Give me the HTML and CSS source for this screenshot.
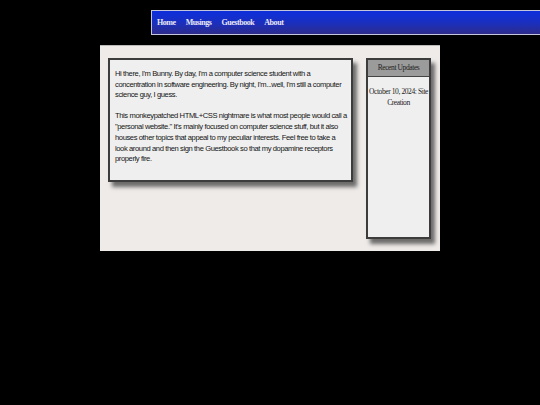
FILE: index.html
```html
<!DOCTYPE html>
<html>
<head>
<meta charset="utf-8">
<link rel="stylesheet" href="styles.css">
</head>
<body>
<nav class="topnav">
  <a href="#">Home</a>
  <a href="#">Musings</a>
  <a href="#">Guestbook</a>
  <a href="#">About</a>
</nav>
<main class="page">
  <section class="intro">
    <p>Hi there, I'm Bunny. By day, I'm a computer science student with a concentration in software engineering. By night, I'm...well, I'm still a computer science guy, I guess.</p>
    <p>This monkeypatched HTML+CSS nightmare is what most people would call a "personal website." It's mainly focused on computer science stuff, but it also houses other topics that appeal to my peculiar interests. Feel free to take a look around and then sign the Guestbook so that my dopamine receptors properly fire.</p>
  </section>
  <aside class="updates">
    <div class="updates-head">Recent Updates</div>
    <div class="updates-body">October 10, 2024: Site Creation</div>
  </aside>
</main>
</body>
</html>
```

FILE: styles.css
```css
html, body {
  margin: 0;
  padding: 0;
  background: #000;
}
body {
  padding-top: 10px;
}
.topnav {
  margin-left: 151px;
  height: 23px;
  border: 1px solid #c4c4dc;
  border-right: none;
  background: linear-gradient(to bottom, #0d2fdc 0%, #1a2fc0 50%, #2d2b8a 100%);
  display: flex;
  align-items: center;
  gap: 10px;
  padding-left: 5px;
}
.topnav a {
  font-family: "Liberation Serif", "Times New Roman", serif;
  font-weight: bold;
  font-size: 8px;
  letter-spacing: -0.45px;
  color: #e8e8f4;
  text-decoration: none;
}
.page {
  margin: 10px 0 0 100px;
  width: 340px;
  height: 206px;
  box-sizing: border-box;
  background: #eeebe9;
  border-top: 1px solid #bbb;
  padding: 12px 9px 0 8px;
  display: flex;
  align-items: flex-start;
  gap: 13px;
}
.intro {
  width: 245px;
  box-sizing: border-box;
  background: #efefef;
  border: 2px solid #3c3c3c;
  box-shadow: 4px 5px 4px rgba(0, 0, 0, 0.55);
  padding: 9px 3px 5px 5px;
  font-family: "Liberation Sans", Arial, sans-serif;
  font-size: 7.6px;
  letter-spacing: -0.4px;
  line-height: 10.7px;
  color: #151515;
}
.intro p {
  margin: 0 0 10.3px;
}
.updates {
  width: 65px;
  height: 181px;
  box-sizing: border-box;
  background: #efefef;
  border: 2px solid #3c3c3c;
  box-shadow: 4px 5px 4px rgba(0, 0, 0, 0.55);
  font-family: "Liberation Serif", "Times New Roman", serif;
  font-size: 7.5px;
  letter-spacing: -0.4px;
  color: #222;
  text-align: center;
}
.updates-head {
  height: 16px;
  line-height: 16px;
  background: #9b9b9b;
  border-bottom: 1px solid #444;
}
.updates-body {
  padding: 9px 0 0;
  line-height: 11px;
}
```
